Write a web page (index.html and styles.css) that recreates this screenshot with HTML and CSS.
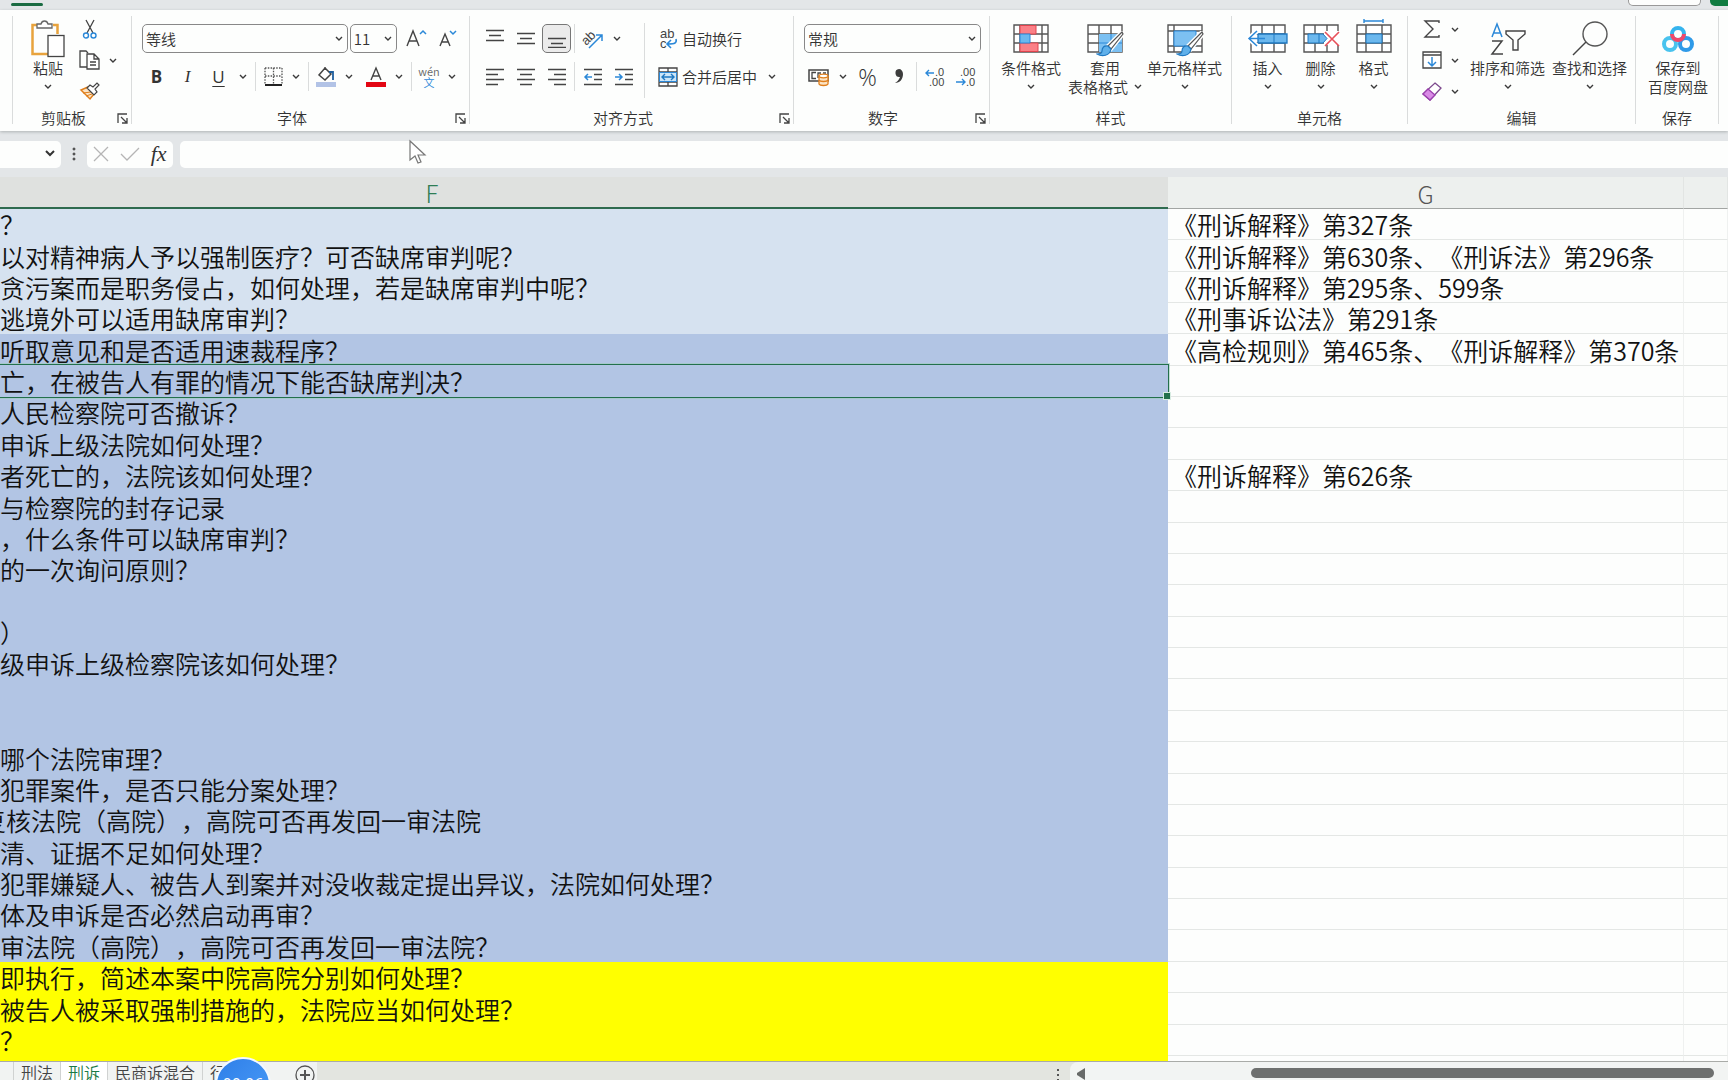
FILE: index.html
```html
<!DOCTYPE html>
<html lang="zh-CN">
<head>
<meta charset="utf-8">
<title>刑诉</title>
<link rel="stylesheet" href="styles.css">
</head>
<body>
<svg width="0" height="0" class="defs" aria-hidden="true">
  <symbol id="chev" viewBox="0 0 8 5"><path d="M1 1l3 3 3-3" fill="none" stroke="#3a3a3a" stroke-width="1.4"/></symbol>
  <symbol id="launch" viewBox="0 0 11 11"><path d="M1 10V1h9M4 4l6 6M10 5v5H5" fill="none" stroke="#444" stroke-width="1.3"/></symbol>
  <symbol id="brush" viewBox="0 0 28 26"><path d="M26 1L12 15l3 3L27 3z" fill="#fff" stroke="#fff" stroke-width="4"/><path d="M26 1L12 15l3 3L27 3z" fill="#fff" stroke="#555" stroke-width="1.2"/><path d="M12 15c-4-1-6 2-6 5 0 2-2 3-5 3 5 3 13 2 14-5z" fill="#5fb0ea" stroke="#1f78c1" stroke-width="1.2"/></symbol>
</svg>

<header class="tab-strip">
  <span class="tab-mark"></span>
  <button class="comment-btn" aria-label="批注"></button>
  <button class="share-btn" aria-label="共享"></button>
</header>

<nav class="ribbon" aria-label="开始">
  <section class="group clipboard">
    <div class="body">
      <button class="big paste"><span class="pic"><svg width="34" height="38" viewBox="0 0 34 38"><path d="M6 5H1.500v29H17M22 5h4.500v9" fill="none" stroke="#e8a33d" stroke-width="2.500"/><path d="M6 8V4h4c1-4 6-4 7 0h4v4z" fill="#fff" stroke="#666" stroke-width="1.300"/><rect x="17" y="15.500" width="16" height="21" fill="#fff" stroke="#444" stroke-width="1.300"/></svg></span><span>粘贴</span><svg class="chev"><use href="#chev"/></svg></button>
      <div class="stack">
        <div class="line"><button class="tool" aria-label="剪切"><svg width="16" height="20" viewBox="0 0 16 20"><path d="M4 1l7 13M12 1L5 14" fill="none" stroke="#444" stroke-width="1.300"/><circle cx="4" cy="16.500" r="2.500" fill="none" stroke="#2b88d8" stroke-width="1.400"/><circle cx="11.500" cy="16.500" r="2.500" fill="none" stroke="#2b88d8" stroke-width="1.400"/></svg></button></div>
        <div class="line"><button class="tool" aria-label="复制"><svg width="22" height="20" viewBox="0 0 22 20"><path d="M8 17H1V1h6l2 2" fill="none" stroke="#444" stroke-width="1.300"/><path d="M8 4h7l5 5v10H8zM15 4v5h5M11 12h6M11 15h6" fill="#fff" stroke="#444" stroke-width="1.300"/></svg></button><button class="drop" aria-label="复制选项"><svg class="chev"><use href="#chev"/></svg></button></div>
        <div class="line"><button class="tool" aria-label="格式刷"><svg width="20" height="18" viewBox="0 0 20 18"><path d="M1 8l9 9 4-5-6-7z" fill="#fbe3c4" stroke="#e07f1c" stroke-width="1.500"/><path d="M3 11l8-1M6 14l6-2" stroke="#e07f1c" fill="none"/><path d="M7 6l3-3 3 2 4-4 2 2-4 4 2 3-3 3z" fill="#fff" stroke="#444" stroke-width="1.200"/></svg></button></div>
      </div>
    </div>
    <div class="foot"><span>剪贴板</span><button class="launch" aria-label="剪贴板设置"><svg width="11" height="11"><use href="#launch"/></svg></button></div>
  </section>

  <section class="group font">
    <div class="body rows">
      <div class="row">
        <label class="pick name"><select aria-label="字体"><option>等线</option></select><svg class="chev"><use href="#chev"/></svg></label>
        <label class="pick size"><select aria-label="字号"><option>11</option></select><svg class="chev"><use href="#chev"/></svg></label>
        <button class="tool grow" aria-label="增大字号"><svg width="22" height="22" viewBox="0 0 22 22"><path d="M2 18L8 3l6 15M4 13h8" fill="none" stroke="#444" stroke-width="1.400"/><path d="M15 6l3-3 3 3" fill="none" stroke="#2b88d8" stroke-width="1.500"/></svg></button>
        <button class="tool" aria-label="减小字号"><svg width="20" height="22" viewBox="0 0 20 22"><path d="M2 18L7 6l5 12M4 14h6" fill="none" stroke="#444" stroke-width="1.400"/><path d="M12 3l3 3 3-3" fill="none" stroke="#2b88d8" stroke-width="1.500"/></svg></button>
      </div>
      <div class="row">
        <button class="tool letter"><b>B</b></button><button class="tool letter"><i>I</i></button><button class="tool letter"><u>U</u></button><button class="drop" aria-label="下划线选项"><svg class="chev"><use href="#chev"/></svg></button>
        <span class="sep"></span>
        <button class="tool" aria-label="边框"><svg width="19" height="19" viewBox="0 0 19 19"><path d="M1 1h17M1 1v16M18 1v16M9.500 1v16M1 9h17" fill="none" stroke="#555" stroke-width="1.300" stroke-dasharray="1.500 1.300"/><path d="M1 18h17" stroke="#222" stroke-width="2"/></svg></button><button class="drop" aria-label="边框选项"><svg class="chev"><use href="#chev"/></svg></button>
        <span class="sep"></span>
        <button class="tool" aria-label="填充颜色"><svg width="20" height="20" viewBox="0 0 20 20"><path d="M9 1l6 6-6 6-6-5zM9 3V0" fill="#fff" stroke="#444" stroke-width="1.500"/><path d="M13 5h4v8" fill="none" stroke="#1f5f9e" stroke-width="1.800"/><path d="M0 15h20v5H0z" fill="#b2c3e6"/></svg></button><button class="drop" aria-label="填充颜色选项"><svg class="chev"><use href="#chev"/></svg></button>
        <button class="tool fontcolor" aria-label="字体颜色"><svg width="20" height="20" viewBox="0 0 20 20"><path d="M5 13L10 1l5 12M7 9h6" fill="none" stroke="#444" stroke-width="1.400"/><path d="M0 15h20v5H0z" fill="#e30613"/></svg></button><button class="drop" aria-label="字体颜色选项"><svg class="chev"><use href="#chev"/></svg></button>
        <span class="sep"></span>
        <button class="tool pinyin"><span>wén</span><span>文</span></button><button class="drop" aria-label="拼音选项"><svg class="chev"><use href="#chev"/></svg></button>
      </div>
    </div>
    <div class="foot"><span>字体</span><button class="launch" aria-label="字体设置"><svg width="11" height="11"><use href="#launch"/></svg></button></div>
  </section>

  <section class="group align">
    <div class="body">
      <div class="rows">
        <div class="row">
          <button class="tool" aria-label="顶端对齐"><svg width="18" height="18" viewBox="0 0 18 18"><path d="M0 .5h18M3 5.500h12M0 10.500h18" stroke="#444" stroke-width="1.300"/></svg></button>
          <button class="tool" aria-label="垂直居中"><svg width="18" height="18" viewBox="0 0 18 18"><path d="M0 3.500h18M3 8.500h12M0 13.500h18" stroke="#444" stroke-width="1.300"/></svg></button>
          <button class="tool on" aria-label="底端对齐"><svg width="18" height="18" viewBox="0 0 18 18"><path d="M0 8.500h18M3 13.500h12M0 17.400h18" stroke="#444" stroke-width="1.300"/></svg></button>
          <span class="sep"></span>
          <button class="tool" aria-label="方向"><svg width="22" height="22" viewBox="0 0 22 22"><text x="0" y="14" transform="rotate(-45 7 11)" font-size="13" fill="#444">ab</text><path d="M7 20L20 7M14 7h6v6" fill="none" stroke="#2b88d8" stroke-width="1.500"/></svg></button><button class="drop" aria-label="方向选项"><svg class="chev"><use href="#chev"/></svg></button>
        </div>
        <div class="row">
          <button class="tool" aria-label="左对齐"><svg width="18" height="18" viewBox="0 0 18 18"><path d="M0 1.500h18M0 6.500h12M0 11.500h18M0 16.500h12" stroke="#444" stroke-width="1.300"/></svg></button>
          <button class="tool" aria-label="居中"><svg width="18" height="18" viewBox="0 0 18 18"><path d="M0 1.500h18M3 6.500h12M0 11.500h18M3 16.500h12" stroke="#444" stroke-width="1.300"/></svg></button>
          <button class="tool" aria-label="右对齐"><svg width="18" height="18" viewBox="0 0 18 18"><path d="M0 1.500h18M6 6.500h12M0 11.500h18M6 16.500h12" stroke="#444" stroke-width="1.300"/></svg></button>
          <span class="sep"></span>
          <button class="tool" aria-label="减少缩进"><svg width="18" height="18" viewBox="0 0 18 18"><path d="M0 1.500h18M10 6.500h8M10 11.500h8M0 16.500h18" stroke="#444" stroke-width="1.300"/><path d="M8 9H1M4 6L1 9l3 3" fill="none" stroke="#2b88d8" stroke-width="1.500"/></svg></button>
          <button class="tool" aria-label="增加缩进"><svg width="18" height="18" viewBox="0 0 18 18"><path d="M0 1.500h18M10 6.500h8M10 11.500h8M0 16.500h18" stroke="#444" stroke-width="1.300"/><path d="M0 9h7M4 6l3 3-3 3" fill="none" stroke="#2b88d8" stroke-width="1.500"/></svg></button>
        </div>
      </div>
      <span class="sep tall"></span>
      <div class="rows">
        <div class="row"><button class="wide"><svg width="20" height="20" viewBox="0 0 20 20"><text x="2" y="9" font-size="13" fill="#444">ab</text><text x="2" y="19" font-size="13" fill="#444">c</text><path d="M18 10c1 4-1 5-8 5M13 11l-4 4 4 4" fill="none" stroke="#2b88d8" stroke-width="1.600"/></svg>自动换行</button></div>
        <div class="row"><button class="wide"><svg width="20" height="20" viewBox="0 0 20 20"><path d="M1 1h18v18H1zM1 5h18M1 15h18M10 1v4M10 15v4" fill="#fff" stroke="#444" stroke-width="1.300"/><path d="M1.500 5.500h17v9h-17z" fill="#cde6f8" stroke="#2b88d8"/><path d="M4 10h12M7 7l-3 3 3 3M13 7l3 3-3 3" fill="none" stroke="#1f78c1" stroke-width="1.400"/></svg>合并后居中</button><button class="drop far" aria-label="合并选项"><svg class="chev"><use href="#chev"/></svg></button></div>
      </div>
    </div>
    <div class="foot"><span>对齐方式</span><button class="launch" aria-label="对齐设置"><svg width="11" height="11"><use href="#launch"/></svg></button></div>
  </section>

  <section class="group number">
    <div class="body rows">
      <div class="row"><label class="pick format"><select aria-label="数字格式"><option>常规</option></select><svg class="chev"><use href="#chev"/></svg></label></div>
      <div class="row">
        <button class="tool" aria-label="会计数字格式"><svg width="22" height="18" viewBox="0 0 22 18"><path d="M1 2h19v11H1z" fill="#fff" stroke="#444" stroke-width="1.500"/><path d="M8 4.500H4v6h4M10 10V5h3M15 5h3" fill="none" stroke="#444" stroke-width="1.300"/><path d="M11 8v8c1 2 8 2 9 0V8" fill="#fbe3c4" stroke="#e07f1c" stroke-width="1.300"/><ellipse cx="15.500" cy="8" rx="4.500" ry="1.800" fill="#fff" stroke="#e07f1c" stroke-width="1.300"/><path d="M11 12c1 2 8 2 9 0" fill="none" stroke="#e07f1c" stroke-width="1.300"/></svg></button><button class="drop" aria-label="会计格式选项"><svg class="chev"><use href="#chev"/></svg></button>
        <button class="tool percent">%</button>
        <button class="tool" aria-label="千位分隔"><svg width="12" height="17" viewBox="0 0 12 17"><path d="M6 1a4 4 0 1 0 1 8c-1 3-3 5-5 6 5 0 8-4 8-9 0-3-2-5-4-5z" fill="#3d3d3d"/></svg></button>
        <span class="sep"></span>
        <button class="tool" aria-label="增加小数位数"><svg width="20" height="20" viewBox="0 0 20 20"><path d="M9 6H1M4 3L1 6l3 3" fill="none" stroke="#2b88d8" stroke-width="1.400"/><text x="10" y="9" font-size="11" fill="#444">.0</text><text x="4" y="19" font-size="11" fill="#444">.00</text></svg></button>
        <button class="tool" aria-label="减少小数位数"><svg width="20" height="20" viewBox="0 0 20 20"><text x="4" y="9" font-size="11" fill="#444">.00</text><path d="M0 15h9M6 12l3 3-3 3" fill="none" stroke="#2b88d8" stroke-width="1.400"/><text x="10" y="19" font-size="11" fill="#444">.0</text></svg></button>
      </div>
    </div>
    <div class="foot"><span>数字</span><button class="launch" aria-label="数字设置"><svg width="11" height="11"><use href="#launch"/></svg></button></div>
  </section>

  <section class="group styles">
    <div class="body">
      <button class="big w4"><span class="pic"><svg width="36" height="30" viewBox="0 0 36 30"><path d="M1 1h34v27H1zM1 10h34M1 19h34M7 1v27M29 1v27" fill="#fff" stroke="#555" stroke-width="1.400"/><path d="M7 1.500h16V10H7zM7 19h18v8.500H7z" fill="#fb8087" stroke="#e0444e"/><path d="M7 10h10v9H7z" fill="#6cb8ee" stroke="#2b88d8"/></svg></span><span>条件格式</span><svg class="chev"><use href="#chev"/></svg></button>
      <button class="big table-style"><span class="pic"><svg width="38" height="36" viewBox="0 0 38 36"><path d="M2 4h34v27H2zM2 13h34M2 22h34M13 4v27M25 4v27" fill="#fff" stroke="#555" stroke-width="1.400"/><path d="M13 13h23v18H13z" fill="#7cc0f2"/><path d="M13 22h23M25 13v18" stroke="#2b88d8"/><use href="#brush" x="10" y="10" width="28" height="26"/></svg></span><span>套用</span><span class="with-chev">表格格式<svg class="chev"><use href="#chev"/></svg></span></button>
      <button class="big w5"><span class="pic"><svg width="38" height="36" viewBox="0 0 38 36"><path d="M2 4h34v27H2zM2 10h34M8 4v27M2 25h34" fill="#fff" stroke="#555" stroke-width="1.400"/><path d="M8 10h22v15H8z" fill="#7cc0f2" stroke="#2b88d8"/><use href="#brush" x="10" y="10" width="28" height="26"/></svg></span><span>单元格样式</span><svg class="chev"><use href="#chev"/></svg></button>
    </div>
    <div class="foot"><span>样式</span></div>
  </section>

  <section class="group cells">
    <div class="body">
      <button class="big w2"><span class="pic"><svg width="40" height="36" viewBox="0 0 40 36"><path d="M3 4h34v27H3zM3 13h34M3 22h34M14 4v27M26 4v27" fill="#fff" stroke="#555" stroke-width="1.400"/><path d="M10 13h29v9H10z" fill="#6cb8ee" stroke="#1f78c1" stroke-width="1.300"/><path d="M26 13v9" stroke="#1f78c1"/><path d="M9 10l-8 7.500L9 25" fill="none" stroke="#fff" stroke-width="5"/><path d="M17 17.500H1M9 10l-8 7.500L9 25" fill="none" stroke="#2b88d8" stroke-width="1.500"/></svg></span><span>插入</span><svg class="chev"><use href="#chev"/></svg></button>
      <button class="big w2"><span class="pic"><svg width="38" height="36" viewBox="0 0 38 36"><path d="M2 4h34v27H2zM2 13h34M2 22h34M13 4v27M25 4v27" fill="#fff" stroke="#555" stroke-width="1.400"/><path d="M22 10h16v14H22z" fill="#fff"/><path d="M6 13h15l4 4.500-4 4.500H6z" fill="#6cb8ee" stroke="#1f78c1"/><path d="M17 13v9" stroke="#1f78c1"/><path d="M23 11l14 14M37 11L23 25" stroke="#e8505a" stroke-width="1.600"/></svg></span><span>删除</span><svg class="chev"><use href="#chev"/></svg></button>
      <button class="big w2"><span class="pic"><svg width="36" height="36" viewBox="0 0 36 36"><path d="M8 0h19M8-2v4M27-2v4" stroke="#2b88d8" stroke-width="1.400"/><path d="M1 4h34v27H1zM1 13h34M1 22h34M10 4v27M26 4v27" fill="#fff" stroke="#555" stroke-width="1.400"/><path d="M10 13h16v9H10z" fill="#6cb8ee" stroke="#1f78c1"/></svg></span><span>格式</span><svg class="chev"><use href="#chev"/></svg></button>
    </div>
    <div class="foot"><span>单元格</span></div>
  </section>

  <section class="group editing">
    <div class="body">
      <div class="stack">
        <div class="line"><button class="tool" aria-label="自动求和"><svg width="18" height="20" viewBox="0 0 18 20"><path d="M16 4V2H2l8 8-8 8h14v-2" fill="none" stroke="#444" stroke-width="1.400"/></svg></button><button class="drop" aria-label="求和选项"><svg class="chev"><use href="#chev"/></svg></button></div>
        <div class="line"><button class="tool" aria-label="填充"><svg width="20" height="18" viewBox="0 0 20 18"><path d="M1 1h18v16H1zM1 4h18" fill="#fff" stroke="#444" stroke-width="1.300"/><path d="M10 6v8M6 11l4 4 4-4" fill="none" stroke="#2b88d8" stroke-width="1.500"/></svg></button><button class="drop" aria-label="填充选项"><svg class="chev"><use href="#chev"/></svg></button></div>
        <div class="line"><button class="tool" aria-label="清除"><svg width="20" height="19" viewBox="0 0 20 19"><path d="M13 1l6 5L8 18l-7-6z" fill="#fff" stroke="#7d4a8d" stroke-width="1.300"/><path d="M6 7l7 6-5 5-7-6z" fill="#d98be6" stroke="#9b3fae" stroke-width="1.300"/></svg></button><button class="drop" aria-label="清除选项"><svg class="chev"><use href="#chev"/></svg></button></div>
      </div>
      <button class="big w5"><span class="pic"><svg width="36" height="36" viewBox="0 0 36 36"><path d="M2 16L7 3l5 13M4 12h6" fill="none" stroke="#2b88d8" stroke-width="1.500"/><path d="M2 20h10L2 33h11" fill="none" stroke="#444" stroke-width="1.500"/><path d="M16 10h19v3l-7 6v10h-5V19l-7-6z" fill="none" stroke="#444" stroke-width="1.400"/></svg></span><span>排序和筛选</span><svg class="chev"><use href="#chev"/></svg></button>
      <button class="big w5"><span class="pic"><svg width="36" height="36" viewBox="0 0 36 36"><circle cx="23" cy="13" r="12" fill="none" stroke="#555" stroke-width="1.400"/><path d="M14 21L1 34" stroke="#444" stroke-width="1.500"/></svg></span><span>查找和选择</span><svg class="chev"><use href="#chev"/></svg></button>
    </div>
    <div class="foot"><span>编辑</span></div>
  </section>

  <section class="group save">
    <div class="body">
      <button class="big w4"><span class="pic"><svg width="34" height="28" viewBox="0 0 34 28"><circle cx="17" cy="9" r="6" fill="none" stroke="#35b4ee" stroke-width="4"/><circle cx="9" cy="19" r="6" fill="none" stroke="#49c3ee" stroke-width="4"/><circle cx="25" cy="19" r="6" fill="none" stroke="#2f9ae8" stroke-width="4"/><path d="M11 9a6 6 0 1 0 12 0" fill="none" stroke="#f0486a" stroke-width="4"/></svg></span><span>保存到</span><span>百度网盘</span></button>
    </div>
    <div class="foot"><span>保存</span></div>
  </section>
</nav>

<div class="formula-bar">
  <div class="name-box"><input type="text" aria-label="名称框"><button aria-label="名称列表"><svg width="12" height="8" viewBox="0 0 12 8"><path d="M2 1l4 4 4-4" fill="none" stroke="#333" stroke-width="2"/></svg></button></div>
  <svg class="grip" width="4" height="14" viewBox="0 0 4 14"><path d="M1 1h2v2H1zM1 6h2v2H1zM1 11h2v2H1z" fill="#555" stroke="#555" stroke-width=".6"/></svg>
  <div class="fx-box">
    <button aria-label="取消"><svg width="16" height="16" viewBox="0 0 16 16"><path d="M1 1l14 14M15 1L1 15" stroke="#b5b5b5" stroke-width="1.300"/></svg></button>
    <button aria-label="输入"><svg width="20" height="14" viewBox="0 0 20 14"><path d="M1 7l6 6L19 1" fill="none" stroke="#b5b5b5" stroke-width="1.300"/></svg></button>
    <button class="fx">fx</button>
  </div>
  <input class="formula" type="text" aria-label="编辑栏">
</div>

<main class="sheet">
  <table>
    <colgroup><col class="col-f"><col class="col-g"><col></colgroup>
    <thead><tr><th class="active">F</th><th>G</th><th></th></tr></thead>
    <tbody>
      <tr class="pale"><td>？</td><td>《刑诉解释》第327条</td><td></td></tr>
      <tr class="pale"><td>以对精神病人予以强制医疗？可否缺席审判呢？</td><td>《刑诉解释》第630条、《刑诉法》第296条</td><td></td></tr>
      <tr class="pale"><td>贪污案而是职务侵占，如何处理，若是缺席审判中呢？</td><td>《刑诉解释》第295条、599条</td><td></td></tr>
      <tr class="pale"><td>逃境外可以适用缺席审判？</td><td>《刑事诉讼法》第291条</td><td></td></tr>
      <tr class="blue"><td>听取意见和是否适用速裁程序？</td><td>《高检规则》第465条、《刑诉解释》第370条</td><td></td></tr>
      <tr class="blue"><td class="selected">亡，在被告人有罪的情况下能否缺席判决？</td><td></td><td></td></tr>
      <tr class="blue"><td>人民检察院可否撤诉？</td><td></td><td></td></tr>
      <tr class="blue"><td>申诉上级法院如何处理？</td><td></td><td></td></tr>
      <tr class="blue"><td>者死亡的，法院该如何处理？</td><td>《刑诉解释》第626条</td><td></td></tr>
      <tr class="blue"><td>与检察院的封存记录</td><td></td><td></td></tr>
      <tr class="blue"><td>，什么条件可以缺席审判？</td><td></td><td></td></tr>
      <tr class="blue"><td>的一次询问原则？</td><td></td><td></td></tr>
      <tr class="blue"><td></td><td></td><td></td></tr>
      <tr class="blue"><td>）</td><td></td><td></td></tr>
      <tr class="blue"><td>级申诉上级检察院该如何处理？</td><td></td><td></td></tr>
      <tr class="blue"><td></td><td></td><td></td></tr>
      <tr class="blue"><td></td><td></td><td></td></tr>
      <tr class="blue"><td>哪个法院审理？</td><td></td><td></td></tr>
      <tr class="blue"><td>犯罪案件，是否只能分案处理？</td><td></td><td></td></tr>
      <tr class="blue"><td class="cut">复核法院（高院），高院可否再发回一审法院</td><td></td><td></td></tr>
      <tr class="blue"><td>清、证据不足如何处理？</td><td></td><td></td></tr>
      <tr class="blue"><td>犯罪嫌疑人、被告人到案并对没收裁定提出异议，法院如何处理？</td><td></td><td></td></tr>
      <tr class="blue"><td>体及申诉是否必然启动再审？</td><td></td><td></td></tr>
      <tr class="blue"><td>审法院（高院），高院可否再发回一审法院？</td><td></td><td></td></tr>
      <tr class="yellow"><td>即执行，简述本案中院高院分别如何处理？</td><td></td><td></td></tr>
      <tr class="yellow"><td>被告人被采取强制措施的，法院应当如何处理？</td><td></td><td></td></tr>
      <tr class="yellow"><td>？</td><td></td><td></td></tr>
      <tr class="yellow"><td></td><td></td><td></td></tr>
    </tbody>
  </table>
</main>

<footer class="sheet-bar">
  <div class="tabs">
    <button>刑法</button><button class="current">刑诉</button><button>民商诉混合</button><button class="last">行政</button>
    <button class="add" aria-label="新工作表"><svg width="20" height="20" viewBox="0 0 20 20"><circle cx="10" cy="10" r="9" fill="none" stroke="#555" stroke-width="1.300"/><path d="M10 5v10M5 10h10" stroke="#555" stroke-width="2"/></svg></button>
  </div>
  <svg class="bar-grip" width="4" height="14" viewBox="0 0 4 14"><path d="M1 1h2v2H1zM1 6h2v2H1zM1 11h2v2H1z" fill="#555"/></svg>
  <div class="scroller">
    <button aria-label="向左滚动"><svg width="8" height="12" viewBox="0 0 8 12"><path d="M8 0v12L0 7V5z" fill="#686a69"/></svg></button>
    <span class="thumb"></span>
  </div>
</footer>

<div class="timer">00:06</div>
<svg class="pointer" width="18" height="25" viewBox="0 0 18 25"><path d="M1 1v19l5-4 3 7 3-1-3-7h7z" fill="#fff" stroke="#777" stroke-width="1.200"/></svg>
</body>
</html>
```
FILE: styles.css
```css
* { box-sizing: border-box; }

body {
  margin: 0;
  height: 100vh;
  overflow: hidden;
  position: relative;
  display: flex;
  flex-direction: column;
  background: #e3e6e8;
  color: #333;
  font: 350 15px/19px "Noto Sans CJK SC", sans-serif;
}

.defs { position: absolute; }
svg { display: block; flex: none; overflow: visible; }
svg text { font-family: "Liberation Sans", sans-serif; }

button, input, select {
  margin: 0;
  padding: 0;
  border: 0;
  background: none;
  color: inherit;
  font: inherit;
}

button {
  display: flex;
  align-items: center;
  justify-content: center;
  white-space: nowrap;
}

.chev { width: 8px; height: 5px; }

/* Top strip */
.tab-strip {
  display: flex;
  flex: none;
  height: 10px;
  padding-left: 11px;
  gap: 9px;
  overflow: hidden;
}
.tab-mark { width: 32px; height: 3px; margin-top: 3px; border-radius: 2px; background: #1a6b42; }
.comment-btn { width: 73px; height: 6px; margin-left: auto; background: #fdfefd; border: 1px solid #999; border-top: 0; border-radius: 0 0 5px 5px; }
.share-btn { width: 18px; height: 6px; background: #107c41; border-radius: 0 0 0 5px; }

/* Ribbon */
.ribbon {
  display: flex;
  flex: none;
  padding: 6px 0 7px 12px;
  background: #fdfefd;
  box-shadow: 0 1px 3px #aeb2b4;
}
.group {
  display: flex;
  flex-direction: column;
  height: 108px;
  border-right: 1px solid #dadcdc;
}
.clipboard { border-left: 1px solid #dadcdc; }
.body { display: flex; flex: 1; padding: 0 8px 0 10px; }
.foot { display: flex; height: 14px; line-height: 16px; text-align: center; }
.foot span { flex: 1; }
.launch { width: 17px; height: 16px; }

.rows { display: flex; flex-direction: column; gap: 9px; padding-top: 8px; }
.row { display: flex; align-items: center; height: 29px; gap: 2px; }
.sep { width: 1px; height: 29px; background: #dadcdc; margin: 0 1px; }
.sep.tall { height: 75px; margin: 7px 13px 0 6px; }
.tool { width: 29px; height: 29px; }
.drop { width: 16px; height: 29px; }
.on { background: #ebebeb; border: 1px solid #777; border-radius: 5px; }

.stack { display: flex; flex-direction: column; gap: 5px; }
.line { display: flex; height: 26px; gap: 2px; }
.line .tool { width: 26px; height: 26px; }
.line .drop { height: 26px; }

.big { flex-direction: column; justify-content: flex-start; padding-top: 4px; }
.big .pic { display: flex; align-items: center; justify-content: center; height: 38px; }
.big > .chev { margin-top: 7px; }
.with-chev { display: flex; align-items: center; gap: 6px; }
.w2 { width: 53px; }
.w4 { width: 64px; }
.w5 { width: 75px; }
.table-style { width: 76px; }

.pick { position: relative; display: flex; align-items: center; height: 29px; border: 1px solid #888; border-radius: 5px; }
.pick select { width: 100%; height: 27px; padding-left: 3px; appearance: none; }
.pick .chev { position: absolute; right: 4px; pointer-events: none; }

.clipboard .body { padding: 0 10px 0 17px; gap: 11px; }
.paste { width: 36px; }

.font { width: 338px; }
.name { width: 207px; }
.size { width: 48px; }
.font .tool { width: 26px; }
.font .grow { width: 30px; margin: 0 2px; }
.font .sep { margin: 0 2px; }
.font .letter { width: 29px; font: 17px/20px "Open Sans", sans-serif; }
.letter i { font-family: "Liberation Serif", serif; }
.letter u { text-underline-offset: 3px; }
.font .fontcolor { margin-left: 4px; }
.pinyin { flex-direction: column; font-size: 11px; line-height: 11px; color: #666; }
.pinyin span + span { color: #2b88d8; }

.align { width: 324px; }
.align .body .rows + .sep { flex: none; }
.wide { gap: 4px; }
.far { margin-left: 5px; }

.number { width: 196px; }
.format { width: 177px; }
.percent { font: 300 23px/24px "Open Sans", sans-serif; }

.styles { width: 242px; }
.styles .body { padding: 0 8px 0 9px; gap: 4px; }
.cells .body { padding: 0 7px 0 9px; }
.editing { width: 228px; }
.editing .body { padding: 0 7px 0 11px; gap: 7px; }
.save { width: 83px; }

/* Formula bar */
.formula-bar { display: flex; flex: none; align-items: center; height: 46px; }
.name-box { display: flex; width: 61px; height: 27px; background: #fdfefd; border-radius: 0 5px 5px 0; }
.name-box input { flex: 1; min-width: 0; }
.name-box button { width: 22px; }
.grip { margin: 0 11px; }
.fx-box { display: flex; width: 86px; height: 27px; background: #fdfefd; border-radius: 5px; }
.fx-box button { flex: 1; }
.fx-box .fx { font: italic 22px/24px "Liberation Serif", serif; }
.formula { flex: 1; height: 27px; margin-left: 7px; background: #fdfefd; border-radius: 5px 0 0 5px; }

/* Worksheet */
.sheet { flex: 1; min-height: 0; overflow: hidden; background: #fdfefd; }
table { width: 100%; table-layout: fixed; border-collapse: separate; border-spacing: 0; }
.col-f { width: 1168px; }
.col-g { width: 516px; }
th {
  height: 32px;
  padding: 2px 0 0;
  background: #edf0ee;
  border-right: 1px solid #e2e5e3;
  border-bottom: 1px solid #a2a5a3;
  color: #555;
  font-weight: 300;
  font-size: 24px;
  line-height: 28px;
}
th.active { padding-right: 304px; background: #dfe1df; border-right: 0; border-bottom: 2px solid #2f6b4f; color: #2e7d55; }
td {
  height: 31px;
  padding: 0 0 0 4px;
  vertical-align: bottom;
  border-right: 1px solid #eff1f0;
  border-bottom: 1px solid #e4e7e5;
  color: #111;
  font-size: 25px;
  font-weight: 350;
  line-height: 30px;
  white-space: nowrap;
  text-spacing-trim: space-all;
}
tr:nth-child(8n+2) td, tr:nth-child(8n+5) td, tr:nth-child(8n) td { height: 32px; }
td:first-child { position: relative; padding-left: 0; border: 0; border-bottom: 1px solid transparent; }
.pale td:first-child { background: #d6e2f0; }
.blue td:first-child { background: #b2c5e4; }
.yellow td:first-child { background: #ffff00; }
td.cut { text-indent: -19px; }
td.selected { z-index: 1; }
.selected::after {
  content: "";
  position: absolute;
  inset: -2px -1px -2px 0;
  border: solid #23704c;
  border-width: 1px 1px 1px 0;
  box-shadow: 0 0 0 1px #9cc9bd99;
}
.selected::before {
  content: "";
  position: absolute;
  z-index: 1;
  right: -3px;
  bottom: -4px;
  width: 6px;
  height: 6px;
  background: #23704c;
  border: 1px solid #d8ece2;
}

/* Sheet tabs */
.sheet-bar { display: flex; flex: none; height: 19px; overflow: hidden; background: #e3e5e0; border-top: 1px solid #a9aba8; }
.tabs { display: flex; width: 317px; padding-left: 13px; background: #f1f3f2; }
.tabs button { height: 20px; padding: 0 7px; border-left: 1px solid #d0d2d1; color: #444; font-size: 16px; line-height: 20px; }
.tabs .current { background: #fff; color: #1a7a45; }
.tabs .last { width: 64px; overflow: hidden; justify-content: flex-start; }
.tabs .add { margin-left: auto; padding: 0 2px; border: 0; height: 25px; }
.bar-grip { margin: 6px 10px 0 auto; }
.scroller { display: flex; width: 658px; height: 18px; padding: 6px 14px 0 7px; background: #f2f4f3; border-radius: 8px 0 0 0; }
.scroller button { align-items: flex-start; }
.thumb { width: 463px; height: 10px; margin-left: auto; border-radius: 5px; background: #6e706f; }

/* Floating items */
.timer {
  position: absolute;
  left: 215px;
  bottom: -33px;
  width: 56px;
  height: 56px;
  padding-top: 15px;
  border: 2px solid #f4f8ff;
  border-radius: 50%;
  background: linear-gradient(135deg, #2f7fe8, #4a9cf8);
  color: #fff;
  font: 16px/20px "Open Sans", sans-serif;
  text-align: center;
}
.pointer { position: absolute; left: 409px; top: 140px; }
```
